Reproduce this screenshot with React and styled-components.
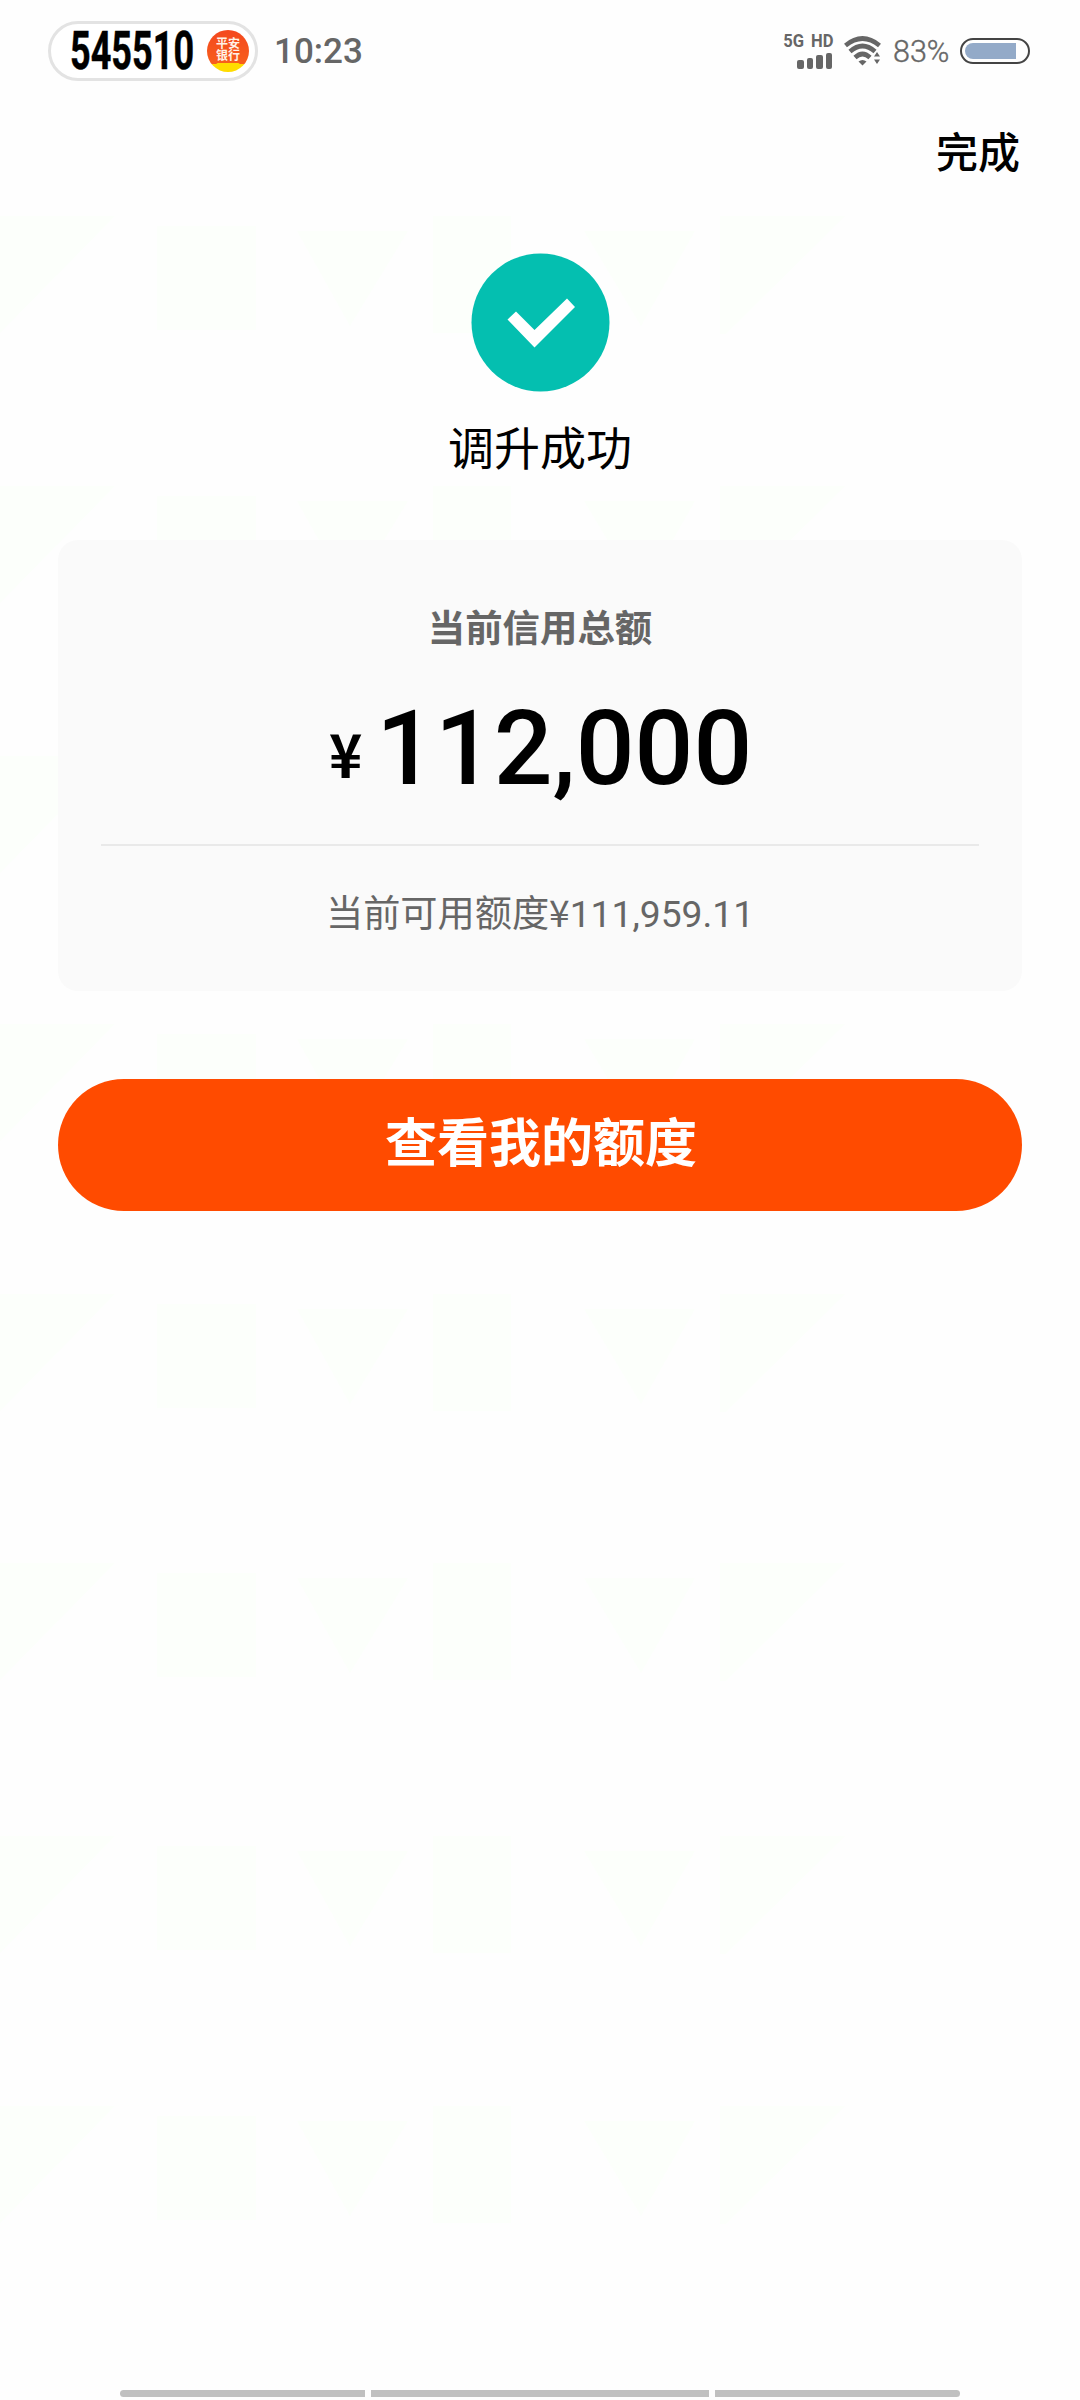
import React from "react";
import styled, { createGlobalStyle } from "styled-components";

const GlobalStyle = createGlobalStyle`
  * { box-sizing: border-box; }
  body { margin: 0; background: #fefefe; font-family: Roboto, "Noto Sans CJK SC", sans-serif; }
`;

const Screen = styled.div`
  position: relative;
  width: 1080px;
  height: 2400px;
  overflow: hidden;
  display: flex;
  flex-direction: column;
  background: #fefefe;
  color: #000;
`;

const Backdrop = styled.svg`
  position: absolute;
  inset: 0;
  width: 1080px;
  height: 2400px;
`;

const StatusBar = styled.header`
  position: relative;
  height: 102px;
  padding: 0 50px 0 48px;
  display: flex;
  align-items: center;
  justify-content: space-between;
`;

const StatusGroup = styled.div`
  display: flex;
  align-items: center;
`;

const StockPill = styled.div`
  width: 210px;
  height: 60px;
  padding: 0 6px 0 19px;
  display: flex;
  align-items: center;
  justify-content: space-between;
  border: 3px solid #e3e3e3;
  border-radius: 30px;
  background: #fff;
`;

const StockCode = styled.span`
  width: 126px;
  font-size: 53px;
  line-height: 54px;
  font-weight: 700;
  -webkit-text-stroke: 0.5px #000;
  transform: scaleX(0.68);
  transform-origin: left center;
`;

const BankBadge = styled.div`
  width: 42px;
  height: 42px;
  padding-top: 7px;
  display: flex;
  flex-direction: column;
  align-items: center;
  border-radius: 50%;
  background: radial-gradient(ellipse 30px 12px at 50% 106%, #ffdc00 98%, transparent 100%), linear-gradient(#f4481e, #f8641c);
`;

const BadgeLine = styled.span`
  height: 12px;
  color: #fff3e8;
  font: 700 12px/12px "Noto Sans CJK SC", sans-serif;
`;

const Clock = styled.span`
  margin-left: 16px;
  padding-top: 1px;
  font-size: 35px;
  font-weight: 500;
  line-height: 40px;
  color: #666;
`;

const Network = styled.div`
  width: 49px;
  height: 37px;
  margin-right: 11px;
  display: flex;
  flex-direction: column;
  align-items: flex-end;
  justify-content: space-between;
`;

const NetworkLabel = styled.span`
  font-size: 18px;
  line-height: 17px;
  font-weight: 700;
  word-spacing: 3px;
  color: #666;
  white-space: nowrap;
  transform: translateY(-1px) scaleX(0.92);
  transform-origin: right center;
`;

const SignalBars = styled.div`
  padding: 0 1px 1px 0;
  display: flex;
  align-items: flex-end;
  gap: 3px;
`;

const SignalBar = styled.i`
  width: 6.5px;
  height: ${({ $height }) => $height}px;
  border-radius: 2px;
  background: #666;
`;

const Wifi = styled.svg`
  width: 38px;
  height: 30px;
  margin-right: 11px;
`;

const Percent = styled.span`
  width: 67px;
  font-size: 30.5px;
  line-height: 34px;
  padding-top: 1px;
  font-weight: 300;
  -webkit-text-stroke: 0.4px #666;
  color: #666;
`;

const Battery = styled.div`
  width: 70px;
  height: 26px;
  padding: 3px;
  border: 2px solid #444;
  border-radius: 13px;
`;

const BatteryLevel = styled.div`
  width: 51px;
  height: 16px;
  border-radius: 8px 0 0 8px;
  background: #93aac8;
`;

const NavBar = styled.nav`
  position: relative;
  height: 102px;
  padding: 0 60px 7px;
  display: flex;
  align-items: center;
  justify-content: flex-end;
`;

const DoneButton = styled.button`
  padding: 0;
  border: 0;
  background: none;
  font: 500 42px/60px "Noto Sans CJK SC", sans-serif;
  color: #000;
`;

const Result = styled.section`
  position: relative;
  height: 336px;
  padding-top: 49px;
  display: flex;
  flex-direction: column;
  align-items: center;
`;

const SuccessIcon = styled.svg`
  width: 139px;
  height: 139px;
`;

const ResultTitle = styled.h1`
  margin: 25px 0 0;
  font-size: 46px;
  line-height: 64px;
  font-weight: 400;
`;

const Card = styled.section`
  position: relative;
  height: 451px;
  margin: 0 58px;
  padding: 62px 43px 0;
  display: flex;
  flex-direction: column;
  align-items: center;
  border-radius: 20px;
  background: #fafafa;
`;

const CardLabel = styled.h2`
  margin: 0;
  font-size: 37.4px;
  line-height: 54px;
  font-weight: 700;
  color: #666;
`;

const Amount = styled.div`
  height: 188px;
  padding-top: 31px;
  display: flex;
  align-items: baseline;
  font-size: 103.5px;
  line-height: 123px;
  font-weight: 500;
`;

const Currency = styled.span`
  position: relative;
  top: -6px;
  margin-right: 13px;
  font: 700 60px/60px "Noto Sans CJK SC", sans-serif;
  transform: scaleX(0.94);
`;

const Available = styled.p`
  align-self: stretch;
  margin: 0;
  padding-top: 38px;
  border-top: 2px solid #e9e9e9;
  font-size: 37.2px;
  line-height: 54px;
  text-align: center;
  color: #666;
`;

const Yen = styled.span`
  font-family: "Noto Sans CJK SC", sans-serif;
`;

const PrimaryButton = styled.button`
  position: relative;
  height: 132px;
  margin: 88px 58px 0;
  padding: 0 0 10px 2px;
  border: 0;
  border-radius: 66px;
  background: #ff4b00;
  color: #fff;
  font: 700 52px/76px "Noto Sans CJK SC", sans-serif;
`;

const GestureBar = styled.footer`
  position: relative;
  margin: auto 120px 3px;
  display: grid;
  grid-template-columns: 245px 338px 245px;
  gap: 6px;
`;

const GestureSegment = styled.div`
  height: 7px;
  border-radius: ${({ $radius }) => $radius || "0"};
  background: #c0c0c0;
`;

const ROWS = [216, 486, 756, 1024, 1294, 1563, 1836, 2106];

export default function App() {
  return (
    <Screen>
      <GlobalStyle />
      <Backdrop viewBox="0 0 1080 2400" fill="#fcfffb">
        {ROWS.map((y) => (
          <path key={y} transform={`translate(0 ${y})`} d="M0 0H115L0 117Z M157 10H256V114H157Z M297 15H408L350 110Z M433 0H511V117H433Z M584 15H695L641 110Z M720 0H845L726 118H720Z" />
        ))}
      </Backdrop>
      <StatusBar>
        <StatusGroup>
          <StockPill>
            <StockCode>545510</StockCode>
            <BankBadge>
              <BadgeLine>平安</BadgeLine>
              <BadgeLine>银行</BadgeLine>
            </BankBadge>
          </StockPill>
          <Clock>10:23</Clock>
        </StatusGroup>
        <StatusGroup>
          <Network>
            <NetworkLabel>5G HD</NetworkLabel>
            <SignalBars>
              {[9, 11, 14, 16].map((h) => <SignalBar key={h} $height={h} />)}
            </SignalBars>
          </Network>
          <Wifi viewBox="0 0 38 30">
            <g fill="none" stroke="#666" strokeWidth="4.600">
              <path d="M1.500 9.500Q18.500-4.500 35.500 9.500" />
              <path d="M6 15.500Q18.500 4.500 31 15.500" />
              <path d="M11 21.500Q18.500 14.500 26 21.500" />
            </g>
            <path d="M14.500 25.500Q18.500 22.500 22.500 25.500L18.500 29.500Z M30 20.500L33 16L36 20.500Z M30 23.500H36L33 28Z" fill="#666" />
          </Wifi>
          <Percent>83%</Percent>
          <Battery><BatteryLevel /></Battery>
        </StatusGroup>
      </StatusBar>
      <NavBar><DoneButton>完成</DoneButton></NavBar>
      <Result>
        <SuccessIcon viewBox="0 0 139 139">
          <circle cx="69.500" cy="69.500" r="69" fill="#04bfb0" />
          <path d="M36.500 66.500L45 58.500L63.500 77L96 45.500L104 54L63.500 94.500Z" fill="#fff" />
        </SuccessIcon>
        <ResultTitle>调升成功</ResultTitle>
      </Result>
      <Card>
        <CardLabel>当前信用总额</CardLabel>
        <Amount><Currency>¥</Currency>112,000</Amount>
        <Available>当前可用额度<Yen>¥</Yen>111,959.11</Available>
      </Card>
      <PrimaryButton>查看我的额度</PrimaryButton>
      <GestureBar>
        <GestureSegment $radius="4px 0 0 4px" />
        <GestureSegment />
        <GestureSegment $radius="0 4px 4px 0" />
      </GestureBar>
    </Screen>
  );
}
